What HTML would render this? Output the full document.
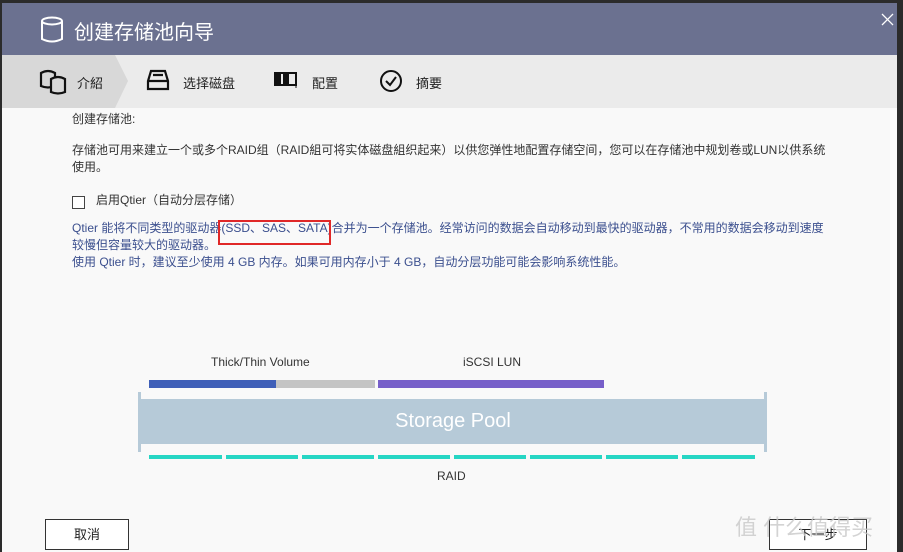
<!DOCTYPE html>
<html><head><meta charset="utf-8"><style>
body{margin:0;width:903px;height:552px;overflow:hidden;background:#2b2b2b;font-family:"Liberation Sans","Noto Sans CJK SC",sans-serif;position:relative}
.dlg{position:absolute;left:2px;top:3px;width:895px;height:549px;background:#f9f9f9;overflow:hidden}
.hd{position:absolute;left:0;top:0;width:895px;height:52px;background:#6b7190;color:#fff;font-size:20px}
.tabs{position:absolute;left:0;top:52px;width:895px;height:53px;background:#ebebeb;font-size:13px;color:#222}
.t{position:absolute;top:18px}
.c{position:absolute;font-size:12px;color:#333;line-height:17px}
.b{position:absolute;background:#3f5fb8}
.btn{position:absolute;top:516px;height:29px;border:1px solid #333;background:#fff;font-size:13px;text-align:center;line-height:29px;color:#222}
</style></head><body>
<div class="dlg">
<div class="hd">
<svg style="position:absolute;left:38px;top:13px" width="24" height="28" viewBox="0 0 24 28"><ellipse cx="12" cy="5" rx="10" ry="3.5" fill="none" stroke="#fff" stroke-width="2"/><path d="M2 5V23Q12 28 22 23V5" fill="none" stroke="#fff" stroke-width="2"/></svg>
<div style="position:absolute;left:72px;top:13px">创建存储池向导</div>
<svg style="position:absolute;left:879px;top:10px" width="13" height="13"><path d="M1 1L12 12M12 1L1 12" stroke="#fff" stroke-width="1.3"/></svg>
</div>
<div class="tabs">
<svg style="position:absolute;left:0;top:0" width="130" height="53"><polygon points="0,0 113,0 126,26 113,53 0,53" fill="#d8d8d8"/></svg>
<svg style="position:absolute;left:37px;top:14px" width="28" height="26" viewBox="0 0 28 26"><g fill="none" stroke="#111" stroke-width="2.2"><path d="M2 4Q9 0 16 4V17Q9 20 2 17Z"/><path d="M12 10Q19 6 26 10V23Q19 26 12 23Z" fill="#d8d8d8"/></g></svg>
<div class="t" style="left:75px">介紹</div>
<svg style="position:absolute;left:144px;top:14px" width="24" height="22"><path d="M5 2H19L22 12V20H2V12Z M2 12H22 M7 6H17" fill="none" stroke="#111" stroke-width="2.2"/></svg>
<div class="t" style="left:181px">选择磁盘</div>
<svg style="position:absolute;left:272px;top:17px" width="26" height="16"><rect x="1" y="1" width="21" height="12" fill="none" stroke="#111" stroke-width="2"/><rect x="1" y="1" width="6" height="12" fill="#111"/><rect x="9" y="1" width="6" height="12" fill="#111"/><line x1="22" y1="0" x2="22" y2="16" stroke="#111"/></svg>
<div class="t" style="left:310px">配置</div>
<svg style="position:absolute;left:377px;top:14px" width="24" height="24"><circle cx="12" cy="12" r="10" fill="none" stroke="#111" stroke-width="2"/><path d="M7 12L11 16L17 8" fill="none" stroke="#111" stroke-width="2"/></svg>
<div class="t" style="left:414px">摘要</div>
</div>
<div class="c" style="left:70px;top:108px">创建存储池:</div>
<div class="c" style="left:70px;top:139px;width:760px">存储池可用来建立一个或多个RAID组（RAID組可将实体磁盘組织起来）以供您弹性地配置存储空间，您可以在存储池中规划卷或LUN以供系统使用。</div>
<div style="position:absolute;left:70px;top:193px;width:11px;height:11px;border:1px solid #444;background:#fff"></div>
<div class="c" style="left:94px;top:189px">启用Qtier（自动分层存储）</div>
<div class="c" style="left:70px;top:217px;width:760px;color:#3b4f8e">Qtier 能将不同类型的驱动器(SSD、SAS、SATA)合并为一个存储池。经常访问的数据会自动移动到最快的驱动器，不常用的数据会移动到速度较慢但容量较大的驱动器。<br>使用 Qtier 时，建议至少使用 4 GB 内存。如果可用内存小于 4 GB，自动分层功能可能会影响系统性能。</div>
<div style="position:absolute;left:216px;top:217px;width:109px;height:21px;border:2px solid #e02828"></div>
<div class="c" style="left:209px;top:351px">Thick/Thin Volume</div>
<div class="c" style="left:461px;top:351px">iSCSI LUN</div>
<div class="b" style="left:147px;top:377px;width:127px;height:8px"></div>
<div class="b" style="left:274px;top:377px;width:99px;height:8px;background:#c4c4c4"></div>
<div class="b" style="left:376px;top:377px;width:226px;height:8px;background:#775fc9"></div>
<div class="b" style="left:136px;top:389px;width:3px;height:60px;background:#b6cad8"></div>
<div class="b" style="left:762px;top:389px;width:3px;height:60px;background:#b6cad8"></div>
<div class="b" style="left:139px;top:396px;width:624px;height:45px;background:#b6cad8;color:#fff;font-size:20px;text-align:center;line-height:45px">Storage Pool</div>
<div class="b" style="left:147px;top:452px;width:73px;height:4px;background:#26d6c4"></div>
<div class="b" style="left:224px;top:452px;width:72px;height:4px;background:#26d6c4"></div>
<div class="b" style="left:300px;top:452px;width:72px;height:4px;background:#26d6c4"></div>
<div class="b" style="left:376px;top:452px;width:72px;height:4px;background:#26d6c4"></div>
<div class="b" style="left:452px;top:452px;width:72px;height:4px;background:#26d6c4"></div>
<div class="b" style="left:528px;top:452px;width:72px;height:4px;background:#26d6c4"></div>
<div class="b" style="left:604px;top:452px;width:72px;height:4px;background:#26d6c4"></div>
<div class="b" style="left:680px;top:452px;width:73px;height:4px;background:#26d6c4"></div>
<div class="c" style="left:435px;top:465px">RAID</div>
<div class="btn" style="left:43px;width:82px">取消</div>
<div class="btn" style="left:767px;width:96px">下一步</div>
<div style="position:absolute;left:733px;top:507px;font-size:22px;color:rgba(200,200,200,.8)">值 什么值得买</div>
</div>
</body></html>
